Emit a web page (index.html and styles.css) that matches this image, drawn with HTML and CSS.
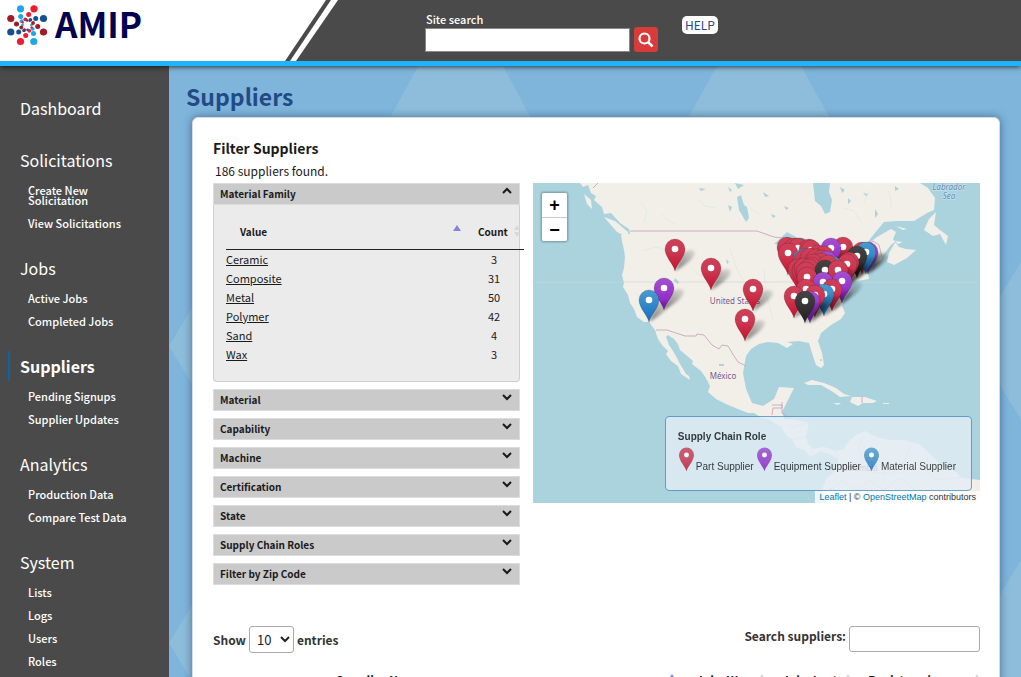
FILE: index.html
```html
<!DOCTYPE html>
<html lang="en">
<head>
<meta charset="utf-8">
<title>AMIP – Suppliers</title>
<link rel="stylesheet" href="styles.css">
</head>
<body>
<header class="topbar">
  <a class="brand" href="#">
    <svg class="brand-bg" viewBox="0 0 338 61" preserveAspectRatio="none" aria-hidden="true">
      <path d="M0 0H326L285 61H0Z" fill="#fff"/>
      <path d="M331 0H338L296 61H290Z" fill="#fff"/>
    </svg>
    <svg class="brand-mark" viewBox="0 0 42 42" aria-hidden="true">
      <g fill="#1ea7e8">
        <circle cx="14.500" cy="4.800" r="3.600"/><circle cx="14.700" cy="12.500" r="2.500"/><circle cx="15.600" cy="17.200" r="1.900"/><circle cx="16.500" cy="21" r="1.300"/>
        <circle cx="27.800" cy="37.500" r="3.600"/><circle cx="27.500" cy="29.500" r="2.500"/><circle cx="26.700" cy="24.800" r="1.900"/><circle cx="25.500" cy="21" r="1.300"/>
      </g>
      <g fill="#ee1c2e">
        <circle cx="28" cy="4.800" r="3.600"/><circle cx="22.700" cy="10.500" r="2.500"/><circle cx="19.300" cy="15.300" r="1.900"/><circle cx="16.700" cy="18.500" r="1.200"/>
        <circle cx="14.500" cy="37.500" r="3.600"/><circle cx="19.700" cy="31.500" r="2.500"/><circle cx="23.300" cy="26.800" r="1.900"/><circle cx="25.600" cy="23.500" r="1.200"/>
      </g>
      <g fill="#174f8f">
        <circle cx="37.500" cy="14.500" r="3.600"/><circle cx="29.700" cy="14.500" r="2.500"/><circle cx="24.500" cy="15.700" r="1.800"/><circle cx="21" cy="16.500" r="1.200"/>
        <circle cx="4.800" cy="28" r="3.600"/><circle cx="12.700" cy="28" r="2.500"/><circle cx="18" cy="26.500" r="1.800"/><circle cx="21.400" cy="25.800" r="1.200"/>
      </g>
      <g fill="#a01c26">
        <circle cx="4.800" cy="14.500" r="3.600"/><circle cx="10.500" cy="20" r="2.500"/><circle cx="15.300" cy="23.500" r="1.900"/><circle cx="18.600" cy="25.500" r="1.200"/>
        <circle cx="37.500" cy="28" r="3.600"/><circle cx="31.700" cy="22.500" r="2.500"/><circle cx="27" cy="19" r="1.900"/><circle cx="23.500" cy="16.800" r="1.200"/>
      </g>
    </svg>
    <span class="brand-name">AMIP</span>
  </a>
  <form class="site-search">
    <label for="site-q">Site search</label>
    <div class="search-row">
      <input id="site-q" type="text">
      <button type="button" aria-label="Search">
        <svg viewBox="0 0 16 16" aria-hidden="true"><circle cx="6.500" cy="6.500" r="5" fill="none" stroke="#fff" stroke-width="2.200"/><path d="M10.200 10.200L14.500 14.500" stroke="#fff" stroke-width="2.600"/></svg>
      </button>
    </div>
  </form>
  <a class="help" href="#">HELP</a>
</header>

<div class="shell">
  <nav class="sidebar">
    <section class="lone"><h2><a href="#">Dashboard</a></h2></section>
    <section><h2><a href="#">Solicitations</a></h2>
      <ul><li><a href="#">Create New Solicitation</a></li><li><a href="#">View Solicitations</a></li></ul></section>
    <section><h2><a href="#">Jobs</a></h2>
      <ul><li><a href="#">Active Jobs</a></li><li><a href="#">Completed Jobs</a></li></ul></section>
    <section><h2 class="current"><a href="#">Suppliers</a></h2>
      <ul><li><a href="#">Pending Signups</a></li><li><a href="#">Supplier Updates</a></li></ul></section>
    <section><h2><a href="#">Analytics</a></h2>
      <ul><li><a href="#">Production Data</a></li><li><a href="#">Compare Test Data</a></li></ul></section>
    <section><h2><a href="#">System</a></h2>
      <ul><li><a href="#">Lists</a></li><li><a href="#">Logs</a></li><li><a href="#">Users</a></li><li><a href="#">Roles</a></li></ul></section>
  </nav>

  <main class="content">
    <svg class="backdrop" viewBox="169 66 852 611" preserveAspectRatio="xMinYMin slice" aria-hidden="true">
      <g fill="#8dbddb">
        <path d="M418 66H503L532 120H389Z"/><path d="M717 66H801L831 120H687Z"/>
        <path d="M169 346L195 303V389Z"/><path d="M169 643L195 600V686Z"/>
        <path d="M998 300L1021 262V420L998 382Z"/><path d="M998 598L1021 560V677H998Z"/>
      </g>
    </svg>
    <h1>Suppliers</h1>
    <div class="card">
      <h2>Filter Suppliers</h2>
      <p class="found">186 suppliers found.</p>
      <div class="columns">
        <div class="filters">
          <details open>
            <summary>Material Family<svg viewBox="0 0 10 6" aria-hidden="true"><path d="M1 5L5 1L9 5"/></svg></summary>
            <div class="panel">
              <table class="values">
                <thead><tr><th class="value">Value<svg class="asc" viewBox="0 0 8 6" aria-hidden="true"><path d="M0 6L4 0L8 6Z"/></svg></th><th class="count">Count<svg class="both" viewBox="0 0 6 12" aria-hidden="true"><path d="M0 5L3 0L6 5ZM0 7L3 12L6 7Z"/></svg></th></tr></thead>
                <tbody>
                  <tr><td><a href="#">Ceramic</a></td><td>3</td></tr>
                  <tr><td><a href="#">Composite</a></td><td>31</td></tr>
                  <tr><td><a href="#">Metal</a></td><td>50</td></tr>
                  <tr><td><a href="#">Polymer</a></td><td>42</td></tr>
                  <tr><td><a href="#">Sand</a></td><td>4</td></tr>
                  <tr><td><a href="#">Wax</a></td><td>3</td></tr>
                </tbody>
              </table>
            </div>
          </details>
          <details><summary>Material<svg viewBox="0 0 10 6" aria-hidden="true"><path d="M1 1L5 5L9 1"/></svg></summary></details>
          <details><summary>Capability<svg viewBox="0 0 10 6" aria-hidden="true"><path d="M1 1L5 5L9 1"/></svg></summary></details>
          <details><summary>Machine<svg viewBox="0 0 10 6" aria-hidden="true"><path d="M1 1L5 5L9 1"/></svg></summary></details>
          <details><summary>Certification<svg viewBox="0 0 10 6" aria-hidden="true"><path d="M1 1L5 5L9 1"/></svg></summary></details>
          <details><summary>State<svg viewBox="0 0 10 6" aria-hidden="true"><path d="M1 1L5 5L9 1"/></svg></summary></details>
          <details><summary>Supply Chain Roles<svg viewBox="0 0 10 6" aria-hidden="true"><path d="M1 1L5 5L9 1"/></svg></summary></details>
          <details><summary>Filter by Zip Code<svg viewBox="0 0 10 6" aria-hidden="true"><path d="M1 1L5 5L9 1"/></svg></summary></details>
        </div>

        <div class="map">
          <svg class="map-art" viewBox="533 183 447 320" preserveAspectRatio="xMidYMid slice" role="img" aria-label="Supplier locations">
            <defs>
              <linearGradient id="red" x2="0" y2="1"><stop offset="0" stop-color="#cf4058"/><stop offset=".4" stop-color="#cb3850"/><stop offset="1" stop-color="#c8102e"/></linearGradient>
              <linearGradient id="blue" x2="0" y2="1"><stop offset="0" stop-color="#4a9bd0"/><stop offset="1" stop-color="#1670c0"/></linearGradient>
              <linearGradient id="purple" x2="0" y2="1"><stop offset="0" stop-color="#a450d0"/><stop offset="1" stop-color="#8c1cc4"/></linearGradient>
              <linearGradient id="black" x2="0" y2="1"><stop offset="0" stop-color="#454545"/><stop offset="1" stop-color="#202020"/></linearGradient>
              <linearGradient id="fade" x1="0" y1="1" x2="1" y2="0"><stop offset="0" stop-opacity=".5"/><stop offset="1" stop-opacity=".08"/></linearGradient>
              <filter id="soft" x="-30%" y="-30%" width="160%" height="160%"><feGaussianBlur stdDeviation="1.500"/></filter>
              <path id="drop" d="M0 22C-1 16-10 8-10 0A10 10 0 0 1 10 0C10 8 1 16 0 22Z"/>
              <g id="pin"><path d="M0 22L8 4Q18-2 20 4Q19 11 0 22Z" fill="url(#fade)" filter="url(#soft)"/><use href="#drop" stroke="#000" stroke-opacity=".2" stroke-width=".8"/><circle r="3.300" fill="#fff"/></g>
            </defs>
            <path fill="#abd3de" d="M533 183H980V503H533Z"/>
            <g fill="#f2efe9">
              <path d="M580 183L583 187 588 185 591 193 596 196 594 200 602 207 604 214 611 213 620 223 629 229 630 234 621 235 622 241 624 250 625 257 624 268 622 275 624 283 623 287 628 295 630 303 634 309 637 317 644 322 649 322 655 330 658 339 662 345 668 351 666 354 671 361 678 366 681 374 687 378 690 380 689 376 686 374 680 364 677 358 673 351 669 345 666 337 668 335 674 339 678 344 680 350 686 355 693 361 692 364 701 371 706 378 710 386 708 392 716 399 726 404 738 409 748 413 754 413 762 418 770 420 781 427 786 435 792 439 796 447 804 450 811 457 814 455 820 451 829 454 837 458 839 464 834 472 826 479 822 490 827 503H980V480L962 478 953 470 942 466 928 452 919 444 904 440 889 440 876 437 865 431 856 435 849 441 844 449 836 451 824 447 814 449 808 444 806 436 809 423 797 420 784 419 782 412 787 402 794 388 779 387 774 399 763 406 752 403 746 389 743 373 746 356 751 349 759 344 768 342 778 343 787 348 793 344 787 342 799 341 809 343 812 353 816 365 821 368 824 365 822 353 818 341 821 333 831 325 841 319 845 313 842 306 844 299 850 291 848 284 857 281 869 279 868 273 874 265 881 260 883 255 891 245 896 241 889 253 887 262 894 265 907 258 916 250 906 249 899 247 893 239 896 232 891 229 877 237 864 247 874 234 884 222 897 221 914 221 927 213 934 210 935 198 928 188 920 183H830L829 192 832 200 830 212 825 214 821 206 815 201 813 183Z"/>
              <path d="M584 194L591 200 592 209 587 204ZM604 217L615 221 628 232 629 238 617 232Z"/>
              <path d="M936 212L929 219 924 230 933 236 940 234 946 245 948 236 940 230 934 225ZM896 226L907 229 903 230ZM895 241L903 242 898 244Z"/>
              <path d="M804 383L812 380 824 383 836 388 844 394 851 396 840 397 833 392 821 385 808 385ZM852 397H865L877 401 873 403 863 403 858 406 850 402ZM833 403H841L838 405ZM883 403H889V404H883Z"/>
            </g>
            <g fill="#abd3de">
              <path d="M737 197L741 195 744 205 747 207 749 218 746 222 742 215 739 210ZM728 205L732 207 730 212ZM675 278L679 282 678 284 674 281ZM774 244L787 232 798 238 806 245 795 243 785 245ZM801 248L811 246 820 254 810 256ZM735 183L744 185 738 189Z"/>
              <path d="M840 187L845 190 842 193ZM848 198L851 201 848 204ZM875 209L878 214 875 218ZM895 186L899 189 895 191ZM863 193L868 194 866 196ZM699 188L706 189 701 191ZM763 192L769 196 765 197ZM771 214L776 216 773 218ZM728 187L732 190 730 192ZM784 206L789 208 786 210ZM726 259L729 262 727 264ZM719 364H724V366H719Z"/>
              <circle cx="821" cy="360" r="1"/>
            </g>
            <g fill="none" stroke="#d6e5e6" stroke-width=".6"><path d="M640 201L647 211 644 222M660 213L668 221 675 224M698 198L705 206 716 208M751 208L760 215M844 208L854 211 861 222M870 190L864 202M889 191L892 207M642 251L656 247 671 252 683 266M691 267L699 275 711 278M730 249L737 269 743 280M764 270L766 294 773 319M637 293L642 304"/></g>
            <g fill="none" stroke="#c7a7bd" stroke-width=".9">
              <path d="M630 231H757L774 237 791 239M656 330L667 330 685 336 696 336 697 334 704 335 712 345 719 349 722 345 728 346 734 356 738 362 746 366M772 415L773 408 782 408V402M772 405H782V413L787 416M864 247L873 241 879 245 882 257M862 396V403M593 188L598 183"/>
              <path opacity=".45" d="M786 421L791 427 807 423M791 440L806 437M811 456L813 450M836 451L839 460M863 436L858 447 862 460 884 466V481M911 445L904 463 891 474 873 472M928 455L925 470 938 480 962 477M830 490L842 481 856 490 870 481 884 490 900 478 915 490"/>
            </g>
            <path d="M533 282H980" stroke="#c4d4d6" stroke-width=".6"/>
            <g class="map-label">
              <text x="735" y="304">United States</text><text x="723" y="379">México</text><text x="860" y="471">Colombia</text>
              <text class="sea" x="949" y="190">Labrador</text><text class="sea" x="949" y="199">Sea</text>
            </g>
            <g fill="url(#red)">
              <use href="#pin" x="675" y="249"/><use href="#pin" x="711" y="268"/><use href="#pin" x="753" y="289"/><use href="#pin" x="745" y="319"/>
            </g>
            <use href="#pin" x="664" y="288" fill="url(#purple)"/><use href="#pin" x="649" y="300" fill="url(#blue)"/>
            <g fill="url(#red)"><use href="#pin" x="787" y="247"/><use href="#pin" x="794" y="248"/><use href="#pin" x="843" y="247"/></g>
            <use href="#pin" x="800" y="248" fill="url(#blue)"/>
            <g fill="url(#red)"><use href="#pin" x="798" y="248"/><use href="#pin" x="809" y="249"/><use href="#pin" x="811" y="250"/><use href="#pin" x="862" y="252"/></g>
            <use href="#pin" x="868" y="252" fill="url(#purple)"/><use href="#pin" x="866" y="252" fill="url(#blue)"/><use href="#pin" x="831" y="248" fill="url(#purple)"/>
            <use href="#pin" x="788" y="253" fill="url(#red)"/>
            <g fill="url(#red)"><use href="#pin" x="818" y="255"/><use href="#pin" x="824" y="256"/></g>
            <use href="#pin" x="857" y="256" fill="url(#black)"/><use href="#pin" x="803" y="259" fill="url(#blue)"/>
            <g fill="url(#red)"><use href="#pin" x="804" y="260"/><use href="#pin" x="810" y="258"/><use href="#pin" x="816" y="259"/><use href="#pin" x="822" y="260"/></g>
            <use href="#pin" x="827" y="261" fill="url(#purple)"/>
            <g fill="url(#red)"><use href="#pin" x="849" y="262"/><use href="#pin" x="847" y="264"/><use href="#pin" x="821" y="263"/><use href="#pin" x="813" y="264"/></g>
            <use href="#pin" x="832" y="266" fill="url(#blue)"/>
            <g fill="url(#red)"><use href="#pin" x="828" y="265"/><use href="#pin" x="798" y="269"/><use href="#pin" x="802" y="270"/><use href="#pin" x="811" y="267"/><use href="#pin" x="804" y="268"/><use href="#pin" x="809" y="269"/><use href="#pin" x="806" y="272"/></g>
            <use href="#pin" x="825" y="270" fill="url(#black)"/><use href="#pin" x="838" y="270" fill="url(#red)"/><use href="#pin" x="807" y="277" fill="url(#red)"/>
            <use href="#pin" x="823" y="282" fill="url(#purple)"/><use href="#pin" x="842" y="281" fill="url(#purple)"/>
            <g fill="url(#red)"><use href="#pin" x="806" y="289"/><use href="#pin" x="832" y="289"/><use href="#pin" x="794" y="296"/></g>
            <use href="#pin" x="824" y="294" fill="url(#blue)"/><use href="#pin" x="815" y="295" fill="url(#red)"/>
            <use href="#pin" x="810" y="301" fill="url(#purple)"/><use href="#pin" x="805" y="301" fill="url(#black)"/>
          </svg>
          <div class="zoom"><button type="button">+</button><button type="button">−</button></div>
          <div class="legend">
            <strong>Supply Chain Role</strong>
            <ul>
              <li><svg viewBox="-10 -10 20 32" aria-hidden="true"><use href="#drop" fill="url(#red)"/><circle r="3.300" fill="#fff"/></svg>Part Supplier</li>
              <li><svg viewBox="-10 -10 20 32" aria-hidden="true"><use href="#drop" fill="url(#purple)"/><circle r="3.300" fill="#fff"/></svg>Equipment Supplier</li>
              <li><svg viewBox="-10 -10 20 32" aria-hidden="true"><use href="#drop" fill="url(#blue)"/><circle r="3.300" fill="#fff"/></svg>Material Supplier</li>
            </ul>
          </div>
          <div class="credit"><a href="#">Leaflet</a> | © <a href="#">OpenStreetMap</a> contributors</div>
        </div>
      </div>

      <div class="controls">
        <label class="length">Show <select><option>10</option><option>25</option><option>50</option></select> entries</label>
        <label class="lookup">Search suppliers: <input type="text"></label>
      </div>
      <table class="suppliers">
        <thead><tr>
          <th class="name">Supplier Name<svg class="asc" viewBox="0 0 8 6" aria-hidden="true"><path d="M0 6L4 0L8 6Z"/></svg></th>
          <th class="jobs">Jobs Won<svg class="both" viewBox="0 0 6 12" aria-hidden="true"><path d="M0 5L3 0L6 5ZM0 7L3 12L6 7Z"/></svg></th>
          <th class="jobs">Jobs Lost<svg class="both" viewBox="0 0 6 12" aria-hidden="true"><path d="M0 5L3 0L6 5ZM0 7L3 12L6 7Z"/></svg></th>
          <th class="reg">Registered<svg class="both" viewBox="0 0 6 12" aria-hidden="true"><path d="M0 5L3 0L6 5ZM0 7L3 12L6 7Z"/></svg></th>
        </tr></thead>
      </table>
    </div>
  </main>
</div>
</body>
</html>
```
FILE: styles.css
```css
* { box-sizing: border-box; }

body {
  margin: 0;
  height: 100vh;
  overflow: hidden;
  display: flex;
  flex-direction: column;
  background: #7fb5db;
  color: #1a1a1a;
  font-family: "Noto Sans CJK SC", "Noto Sans", sans-serif;
  font-size: 12px;
}

h1, h2, p, ul { margin: 0; padding: 0; }
ul { list-style: none; }
a { color: inherit; text-decoration: none; }
input, button, select { font: inherit; color: inherit; }

/* Top bar */
.topbar {
  position: relative;
  z-index: 2;
  flex: none;
  display: flex;
  align-items: flex-start;
  background: #4a4a4a;
  border-bottom: 5px solid #1fb4fd;
  box-shadow: 0 1px 5px rgba(0, 0, 0, .7);
  color: #fff;
}
.brand {
  position: relative;
  display: flex;
  align-items: center;
  gap: 7px;
  width: 338px;
  height: 61px;
  padding: 0 0 11px 6px;
  color: #02024f;
}
.brand-bg { position: absolute; inset: 0; width: 100%; height: 100%; }
.brand-mark { position: relative; width: 42px; height: 42px; }
.brand-name { position: relative; padding-bottom: 4px; font-size: 35px; font-weight: 700; line-height: 40px; }
.site-search { margin-left: 87px; padding-top: 12px; }
.site-search label { display: block; padding-left: 1px; font-size: 11px; font-weight: 500; line-height: 15px; }
.search-row { display: flex; align-items: center; gap: 4px; }
.search-row input { width: 205px; height: 24px; padding: 0 4px; border: 1px solid #888; background: #fff; color: #222; }
.search-row button {
  display: grid;
  place-items: center;
  width: 24px;
  height: 25px;
  padding: 0;
  border: 0;
  border-radius: 3px;
  background: #d93a3a;
}
.search-row button svg { width: 16px; height: 16px; }
.help {
  margin: 16px 0 0 24px;
  padding: 0 3px;
  border-radius: 5px;
  background: #fff;
  color: #234a86;
  line-height: 18px;
}

/* Side navigation */
.shell { flex: 1; display: flex; min-height: 0; }
.sidebar {
  position: relative;
  flex: none;
  width: 169px;
  padding: 27px 0 0;
  background: #4a4a4a;
  color: #fff;
}
.sidebar section { margin-bottom: 19px; }
.sidebar .lone { margin-bottom: 22px; }
.sidebar h2 {
  margin: 0 0 3px 8px;
  padding-left: 10px;
  border-left: 2px solid transparent;
  font-size: 16px;
  font-weight: 400;
  line-height: 30px;
}
.sidebar .current { border-color: #1062a5; font-weight: 700; }
.sidebar ul { padding: 0 35px 0 28px; }
.sidebar li { padding: 7px 0 6px; line-height: 10px; font-size: 11px; font-weight: 500; }
.sidebar li a { display: block; }

/* Page body */
.content { position: relative; flex: 1; min-width: 0; padding: 15px 21px 0 23px; }
.backdrop { position: absolute; inset: 0; width: 100%; height: 100%; }
.content h1 {
  position: relative;
  margin: 0 -6px 6px;
  color: #234a86;
  font-size: 23px;
  font-weight: 700;
  line-height: 30px;
}
.card {
  position: relative;
  padding: 20px 19px 40px 20px;
  border: 1px solid #d5dade;
  border-radius: 6px;
  background: #fff;
  box-shadow: 0 0 9px rgba(30, 60, 90, .6);
}
.card h2 { font-size: 14px; line-height: 20px; }
.found { padding: 3px 2px 2px; font-size: 12px; line-height: 20px; }
.columns { display: grid; grid-template-columns: 307px minmax(0, 1fr); gap: 13px; }

.filters { display: flex; flex-direction: column; gap: 7px; }
.filters summary {
  display: flex;
  justify-content: space-between;
  align-items: flex-start;
  height: 22px;
  padding: 0 7px 0 6px;
  border: 1px solid #dcdcdc;
  background: #cacaca;
  font-size: 10px;
  font-weight: 700;
  line-height: 20px;
  cursor: pointer;
}
.filters summary svg { width: 10px; height: 6px; margin-top: 4px; overflow: visible; fill: none; stroke: #1a1a1a; stroke-width: 2; }
.panel {
  padding: 9px 0 17px 12px;
  border: 1px solid #cfcfcf;
  border-top: 0;
  border-radius: 0 0 4px 4px;
  background: #ebebeb;
}
.values { width: calc(100% + 5px); border-collapse: collapse; table-layout: fixed; font-size: 11px; }
.values th { height: 35px; padding: 0 0 0 14px; border-bottom: 1px solid #222; font-size: 10px; text-align: left; }
.values .count { width: 60px; }
.values td { height: 19px; padding: 0; line-height: 19px; }
.values td:last-child { text-align: center; }
.values a { text-decoration: underline; }
.asc { float: right; width: 8px; height: 6px; margin: 1px 3px; fill: #8186dc; }
.both { float: right; width: 6px; height: 12px; margin-top: 1px; fill: #d8d8d8; }
.values .both { margin-right: 4px; }

/* Map */
.map { position: relative; height: 320px; overflow: hidden; background: #abd3de; font-family: "Liberation Sans", Arial, sans-serif; }
.map-art { display: block; width: 100%; height: 100%; }
.map-label { font-family: "Noto Sans", sans-serif; font-size: 8px; text-anchor: middle; fill: #75597d; stroke: #f6f2f2; stroke-width: 1px; paint-order: stroke; }
.map-label .sea { font-style: italic; fill: #5b84b5; stroke: #d8e8f0; }
.zoom {
  position: absolute;
  top: 9px;
  left: 8px;
  border: 1px solid #86a8b1;
  border-radius: 3px;
  overflow: hidden;
  box-shadow: 0 0 2px rgba(0, 0, 0, .4);
}
.zoom button { display: block; width: 25px; height: 24px; padding: 0; border: 0; background: #fff; color: #000; font-size: 18px; font-weight: 700; line-height: 24px; }
.zoom button + button { border-top: 1px solid #bfcfd4; }
.legend {
  position: absolute;
  right: 8px;
  bottom: 12px;
  padding: 12px 15px 18px 12px;
  border: 1px solid #4e8fc0;
  border-radius: 4px;
  background: #e4eef6;
  color: #111;
  font-size: 10px;
  opacity: .8;
}
.legend strong { display: block; padding-bottom: 3px; line-height: 15px; }
.legend ul { display: flex; gap: 3px; padding-left: 1px; }
.legend li { display: flex; align-items: flex-end; gap: 2px; line-height: 10px; white-space: nowrap; }
.legend li svg { width: 15px; height: 25px; }
.credit { position: absolute; right: 0; bottom: 0; padding: 0 4px; background: rgba(255, 255, 255, .8); color: #333; font-size: 9px; line-height: 12px; }
.credit a { color: #0078a8; }

/* Supplier table */
.controls { display: flex; justify-content: space-between; padding-top: 41px; color: #333; font-size: 12px; font-weight: 700; }
.controls label { display: flex; gap: 3px; line-height: 27px; }
.controls .lookup { line-height: 20px; }
.controls select { width: 45px; height: 27px; padding: 0 3px; border: 1px solid #aaa; border-radius: 3px; background: #fff; color: #222; font-size: 13px; font-weight: 400; }
.controls input { width: 131px; height: 26px; border: 1px solid #aaa; border-radius: 3px; }
.suppliers { width: 100%; margin-top: 16px; border-collapse: collapse; table-layout: fixed; font-size: 12px; }
.suppliers th { padding: 3px 0 10px; line-height: 16px; text-align: left; }
.suppliers .name { padding-left: 123px; }
.suppliers .jobs { width: 86px; padding-left: 17px; }
.suppliers .reg { width: 129px; padding-left: 17px; }
.suppliers th svg { margin-top: 2px; }
```
